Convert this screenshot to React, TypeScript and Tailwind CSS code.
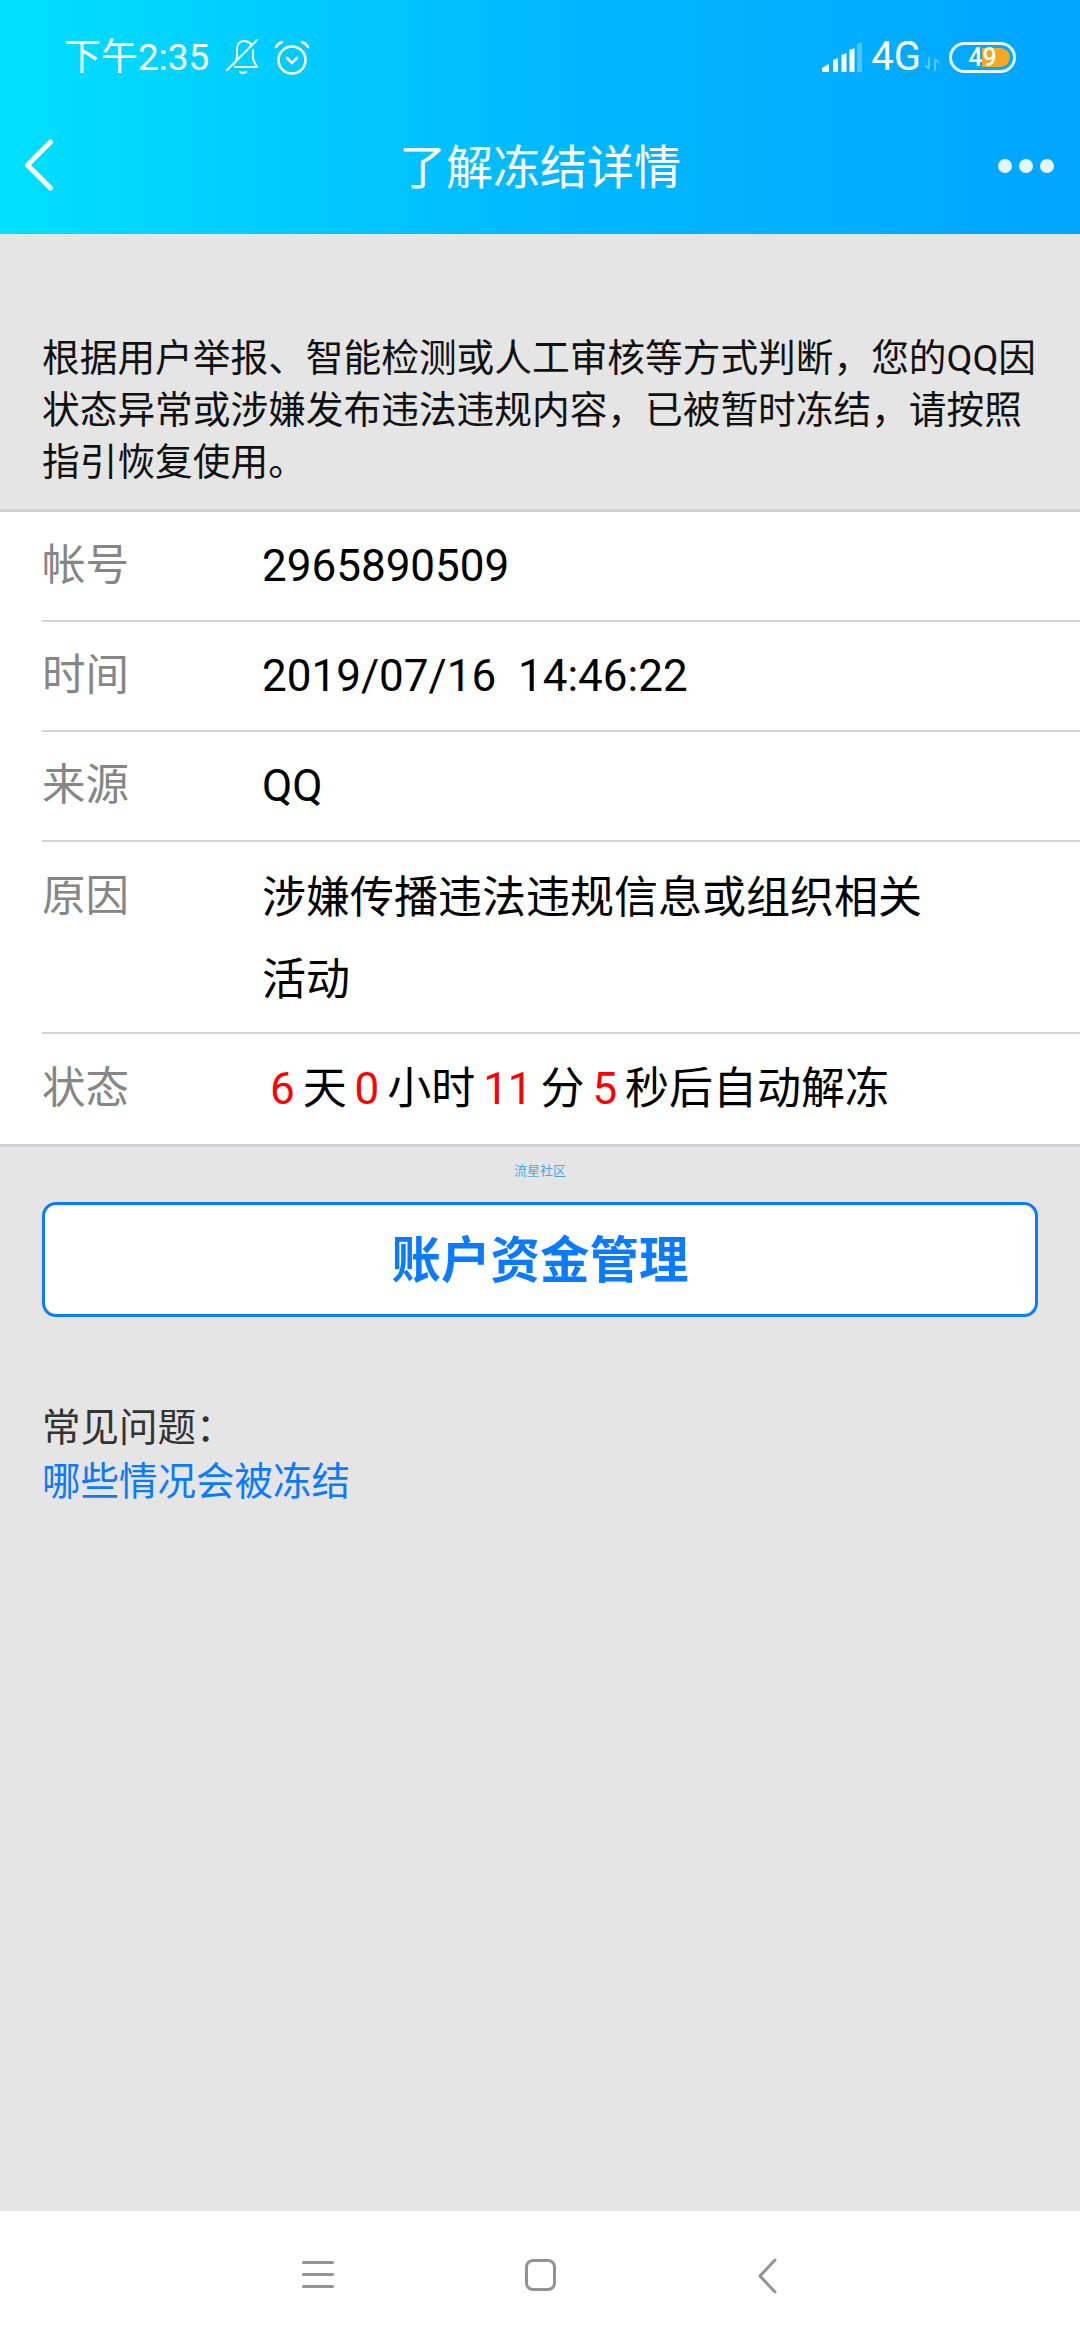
import { ChevronLeft } from 'lucide-react';

const fontStack = { fontFamily: 'Roboto, "Noto Sans CJK SC", sans-serif' };

function BellOff() {
  return (
    <svg width="34" height="36" viewBox="0 0 34 36" fill="none" stroke="white" strokeWidth="2" strokeLinecap="round">
      <path d="M7 26c3-3 4-6 4-10v-6c0-5 3-8 7-8 3 0 5 1 7 3" />
      <path d="M27 11v8c0 3 2 5 4 9H9" />
      <path d="M1 31 31 1" />
      <path d="M14 33c2 1 4 1 6 0" />
    </svg>
  );
}

function Alarm() {
  return (
    <svg width="36" height="36" viewBox="0 0 36 36" fill="none" stroke="white" strokeWidth="2.600" strokeLinecap="round">
      <circle cx="18" cy="21" r="13.500" />
      <path d="M2 8c1-2 3-4 6-5" />
      <path d="M34 8c-1-2-3-4-6-5" />
      <path d="M13 19l5 5 5-5" />
    </svg>
  );
}

function Signal() {
  return (
    <svg width="40" height="30" viewBox="0 0 40 30" fill="white">
      <path d="M0 30v-4l7-4v8z" />
      <path d="M11 30V18l5-2v14z" />
      <path d="M19.500 30V13l5-2v19z" />
      <path d="M27.500 30V8l5-2v24z" />
      <path d="M35 30V2l5-2v30z" opacity="0.3" />
    </svg>
  );
}

function DataArrows() {
  return (
    <svg width="14" height="14" viewBox="0 0 14 14" fill="none" stroke="white" strokeWidth="2" opacity="0.35">
      <path d="M4 0v12M0 8l4 4" />
      <path d="M10 14V2M14 6l-4-4" />
    </svg>
  );
}

function Battery() {
  return (
    <div className="relative w-[67px] h-[31px] rounded-full border-[3px] border-white/90 p-[3px] flex justify-end">
      <div className="w-[28px] h-full rounded-r-full bg-[#f5a623]" />
      <span className="absolute inset-0 flex items-center justify-center text-[25px] font-medium leading-none text-white">49</span>
    </div>
  );
}

function Row({ label, children, tall }: { label: string; children: React.ReactNode; tall?: boolean }) {
  return (
    <div className={`flex border-b-[2px] border-[#d4d4d6] last:border-b-0 ${tall ? 'h-[192px] pt-[28px]' : 'h-[110px] items-center'}`}>
      <div className={`w-[220px] shrink-0 text-[43.500px] text-[#868686] ${tall ? 'leading-[54px]' : ''}`}>{label}</div>
      <div className="text-[44px] text-black">{children}</div>
    </div>
  );
}

export default function App() {
  return (
    <div className="w-[1080px] h-[2340px] flex flex-col bg-[#e5e5e5] overflow-hidden" style={fontStack}>
      {/* Header */}
      <div className="h-[234px] shrink-0 bg-gradient-to-r from-[#00e0ff] via-[#00b9ff] to-[#00a5ff] text-white flex flex-col">
        <div className="h-[114px] flex items-center justify-between pl-[64px] pr-[64px]">
          <div className="flex items-center">
            <span className="text-[37px] leading-none">下午2:35</span>
            <span className="ml-[17px] mr-[14px]"><BellOff /></span>
            <Alarm />
          </div>
          <div className="flex items-center">
            <Signal />
            <span className="text-[40px] leading-none ml-[9px]">4G</span>
            <span className="mt-[14px] ml-[4px] mr-[10px]"><DataArrows /></span>
            <Battery />
          </div>
        </div>
        <div className="flex-1 relative flex items-center justify-center pb-[14px]">
          <ChevronLeft className="absolute left-[-7px] top-[5px]" size={92} strokeWidth={1.3} color="white" />
          <span className="text-[47px] leading-none">了解冻结详情</span>
          <div className="absolute right-[26px] top-[45px] flex gap-[7px]">
            <div className="w-[14px] h-[14px] rounded-full bg-white/90" />
            <div className="w-[14px] h-[14px] rounded-full bg-white/90" />
            <div className="w-[14px] h-[14px] rounded-full bg-white/90" />
          </div>
        </div>
      </div>

      {/* Notice */}
      <div className="h-[275px] shrink-0 pt-[98px] px-[42px] text-[37.700px] leading-[52px] text-[#111111]">
        根据用户举报、智能检测或人工审核等方式判断，您的QQ因状态异常或涉嫌发布违法违规内容，已被暂时冻结，请按照指引恢复使用。
      </div>

      {/* Detail list */}
      <div className="bg-white border-y-[3px] border-[#cfcfd3] pl-[42px] shrink-0">
        <Row label="帐号">2965890509</Row>
        <Row label="时间">2019/07/16&nbsp;&nbsp;14:46:22</Row>
        <Row label="来源">QQ</Row>
        <Row label="原因" tall>
          <div className="w-[680px] leading-[82px] -mt-[13px]">涉嫌传播违法违规信息或组织相关活动</div>
        </Row>
        <Row label="状态">
          <span className="[word-spacing:-3px]">
            <span className="text-[#ff0000] ml-[8px]">6</span> 天 <span className="text-[#ff0000]">0</span> 小时 <span className="text-[#ff0000]">11</span> 分 <span className="text-[#ff0000]">5</span> 秒后自动解冻
          </span>
        </Row>
      </div>

      {/* Watermark and action */}
      <div className="text-center text-[13px] leading-[16px] text-[#4aa8ee] mt-[16px]">流星社区</div>
      <div className="mx-[42px] mt-[23px] h-[115px] shrink-0 rounded-[14px] border-[3px] border-[#0a7aff] bg-white flex items-center justify-center pt-[3px] text-[49.500px] font-bold text-[#0a7aff]">
        账户资金管理
      </div>

      {/* FAQ */}
      <div className="px-[42px] mt-[84px] text-[38.500px] leading-[54px]">
        <div className="text-[#333333]">常见问题：</div>
        <div className="text-[#0a7aff]">哪些情况会被冻结</div>
      </div>

      {/* Nav bar */}
      <div className="mt-auto h-[129px] shrink-0 bg-white relative">
        <div className="absolute left-[302px] top-[50px] flex flex-col gap-[9px]">
          <div className="w-[32px] h-[3px] rounded-full bg-[#939393]" />
          <div className="w-[32px] h-[3px] rounded-full bg-[#939393]" />
          <div className="w-[32px] h-[3px] rounded-full bg-[#939393]" />
        </div>
        <div className="absolute left-[525px] top-[48px] w-[31px] h-[32px] rounded-[8px] border-[3px] border-[#939393]" />
        <svg className="absolute left-[756px] top-[47px]" width="32" height="36" viewBox="0 0 32 36" fill="none" stroke="#939393" strokeWidth="3" strokeLinecap="round" strokeLinejoin="round">
          <path d="M19 2 4 18l15 16" />
        </svg>
      </div>
    </div>
  );
}
